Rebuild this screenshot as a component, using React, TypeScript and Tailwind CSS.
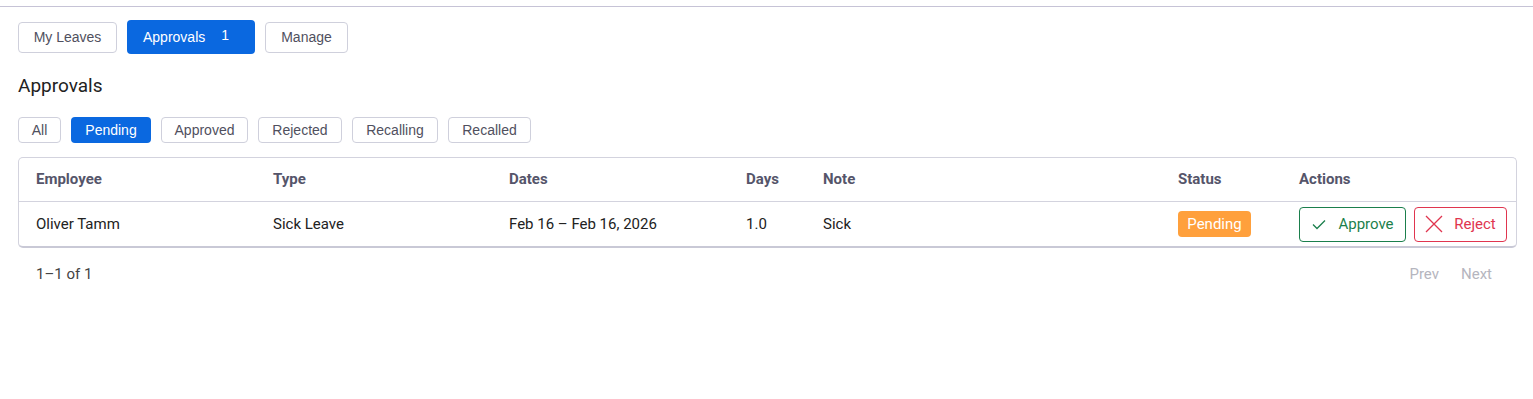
import React from "react";

const btnFont = { fontFamily: '"Liberation Sans", Arial, sans-serif' };

export default function App() {
  const filters: [string, string][] = [
    ["All", "w-[43px]"],
    ["Pending", "w-[80px]"],
    ["Approved", "w-[87px]"],
    ["Rejected", "w-[84px]"],
    ["Recalling", "w-[86px]"],
    ["Recalled", "w-[83px]"],
  ];
  const cols = "grid grid-cols-[237px_236px_237px_77px_355px_121px_1fr] pl-[17px] pr-[10px]";
  return (
    <div className="min-h-[399px] bg-white text-[#222]" style={{ fontFamily: 'Roboto, "Noto Sans", sans-serif' }}>
      <div className="pt-[6px]">
        <div className="h-px bg-[#c6c3d6]" />
      </div>
      <div className="pl-[18px] pr-[16px]">
        <div className="flex items-center gap-[10px] pt-[13px]" style={btnFont}>
          <button className="h-[31px] w-[99px] rounded-[4px] border border-[#cfd0dc] bg-white text-[14px] text-[#50505e]">My Leaves</button>
          <button className="h-[34px] w-[128px] pl-[16px] rounded-[4px] bg-[#0a68e0] text-[14px] text-white flex items-center">
            <span>Approvals</span>
            <span className="ml-[16px] mb-[3px]">1</span>
          </button>
          <button className="h-[31px] w-[83px] rounded-[4px] border border-[#cfd0dc] bg-white text-[14px] text-[#50505e]">Manage</button>
        </div>
        <h2 className="mt-[19px] text-[19px] leading-[26px] text-[#222] font-normal">Approvals</h2>
        <div className="flex items-center gap-[10px] mt-[18px]" style={btnFont}>
          {filters.map(([f, w]) =>
            f === "Pending" ? (
              <button key={f} className={`h-[26px] ${w} rounded-[4px] bg-[#0a68e0] text-[14px] text-white`}>{f}</button>
            ) : (
              <button key={f} className={`h-[26px] ${w} rounded-[4px] border border-[#cfd0dc] bg-white text-[14px] text-[#50505e]`}>{f}</button>
            )
          )}
        </div>
        <div className="mt-[14px] rounded-[5px] border border-[#d3d3de] border-b-2 border-b-[#c9c9d6] text-[15px]">
          <div className={`${cols} h-[44px] items-center border-b border-[#d3d3de] font-bold text-[#55556a]`}>
            <div>Employee</div>
            <div>Type</div>
            <div>Dates</div>
            <div>Days</div>
            <div>Note</div>
            <div>Status</div>
            <div>Actions</div>
          </div>
          <div className={`${cols} h-[44px] items-center text-[#222]`}>
            <div>Oliver Tamm</div>
            <div>Sick Leave</div>
            <div>Feb 16 – Feb 16, 2026</div>
            <div>1.0</div>
            <div>Sick</div>
            <div>
              <span className="inline-flex items-center justify-center h-[26px] w-[73px] rounded-[4px] bg-[#ffa03c] text-white">Pending</span>
            </div>
            <div className="flex items-center gap-[8px]">
              <button className="h-[35px] w-[107px] rounded-[4px] border border-[#1b7f4c] text-[#1b7f4c] flex items-center justify-center gap-[11px]">
                <svg width="16" height="16" viewBox="0 0 16 16" fill="none" stroke="currentColor" strokeWidth="1.3">
                  <path d="M2 8.5l4 4 8-8" />
                </svg>
                <span>Approve</span>
              </button>
              <button className="h-[35px] w-[93px] rounded-[4px] border border-[#e0354f] text-[#e0354f] flex items-center justify-center gap-[11px]">
                <svg width="18" height="18" viewBox="0 0 18 18" fill="none" stroke="currentColor" strokeWidth="1.3">
                  <path d="M1 1l16 16M17 1L1 17" />
                </svg>
                <span>Reject</span>
              </button>
            </div>
          </div>
        </div>
        <div className="flex items-center justify-between h-[52px] pl-[18px] pr-[25px] text-[15px]">
          <span className="text-[#444]">1–1 of 1</span>
          <div className="flex gap-[22px] text-[#b5b5be]">
            <span>Prev</span>
            <span>Next</span>
          </div>
        </div>
      </div>
    </div>
  );
}
